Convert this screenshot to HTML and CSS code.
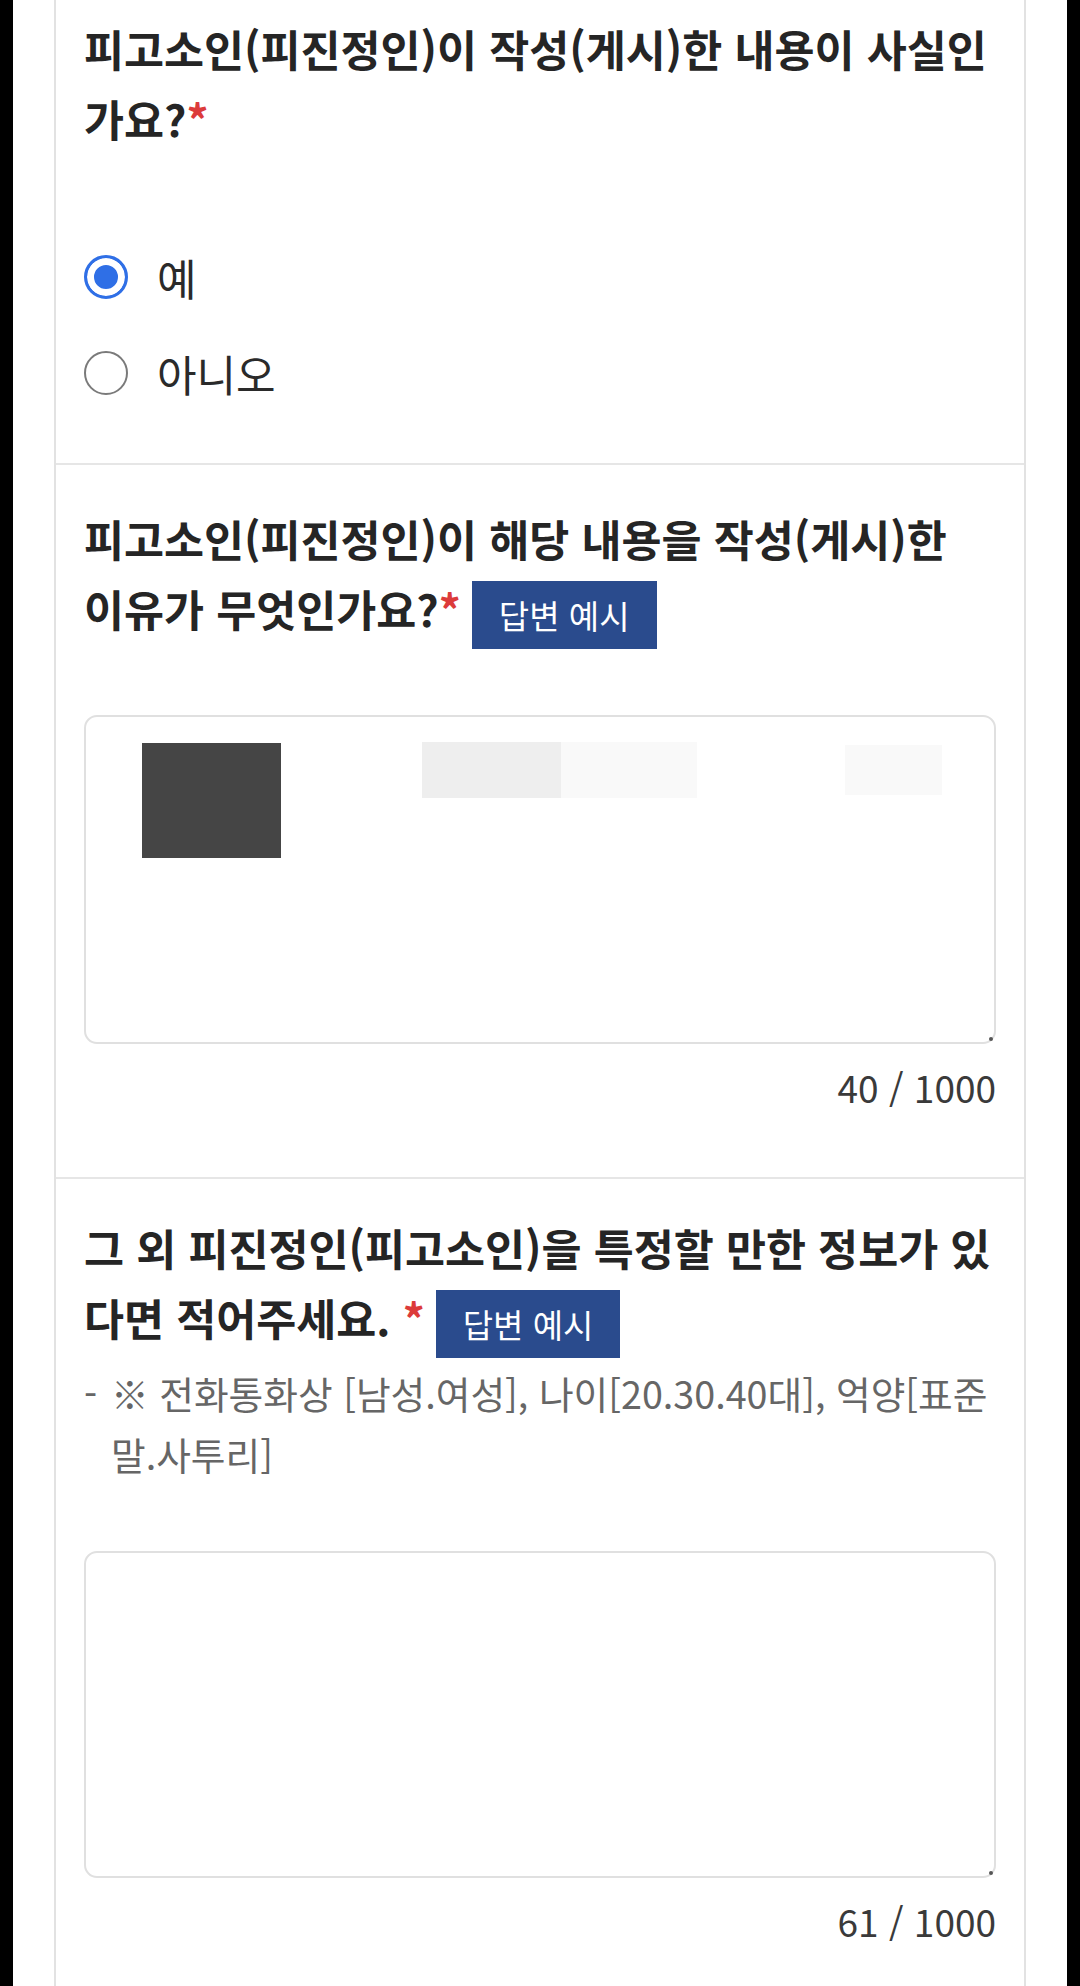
FILE: index.html
```html
<!DOCTYPE html>
<html lang="ko">
<head>
<meta charset="utf-8">
<title>신고서 작성</title>
<link rel="stylesheet" href="styles.css">
</head>
<body>
<div class="page">
  <div class="card">
    <section class="question q-first">
      <h2 class="q-title">피고소인(피진정인)이 작성(게시)한 내용이 사실인가요?<span class="req">*</span></h2>
      <div class="options">
        <label class="option"><input type="radio" name="fact" checked><span>예</span></label>
        <label class="option"><input type="radio" name="fact"><span>아니오</span></label>
      </div>
    </section>

    <section class="question q-second">
      <h2 class="q-title">피고소인(피진정인)이 해당 내용을 작성(게시)한<br>이유가 무엇인가요?<span class="req">*</span><button type="button" class="example-btn">답변 예시</button></h2>
      <div class="field field-reason">
        <textarea class="answer" aria-label="작성 이유"></textarea>
        <span class="redact redact-dark"></span>
        <span class="redact redact-light"></span>
        <span class="redact redact-faint redact-faint-1"></span>
        <span class="redact redact-faint redact-faint-2"></span>
      </div>
      <div class="counter">40 / 1000</div>
    </section>

    <section class="question q-third">
      <h2 class="q-title">그 외 피진정인(피고소인)을 특정할 만한 정보가 있다면 적어주세요. <span class="req">*</span><button type="button" class="example-btn">답변 예시</button></h2>
      <p class="hint"><span class="hint-dash">-</span><span class="hint-text">※ 전화통화상 [남성.여성], 나이[20.30.40대], 억양[표준말.사투리]</span></p>
      <div class="field field-info">
        <textarea class="answer" aria-label="특정 정보"></textarea>
      </div>
      <div class="counter">61 / 1000</div>
    </section>
  </div>
</div>
</body>
</html>
```

FILE: styles.css
```css
html, body {
  margin: 0;
  padding: 0;
  background: #000;
}

body {
  font-family: "Noto Sans CJK KR", "Noto Sans", sans-serif;
  color: #222;
}

.page {
  margin: 0 13px;
  padding: 0 41px;
  background: #fff;
  min-height: 1986px;
}

.card {
  border-left: 2px solid #e2e2e2;
  border-right: 2px solid #e2e2e2;
  min-height: 1986px;
}

.question {
  padding: 36px 28px 65px 28px;
  border-bottom: 2px solid #e6e6e6;
}

.q-first {
  padding-top: 14px;
  padding-bottom: 42px;
}

.q-second {
  padding-top: 39px;
}

.q-third {
  padding-top: 34px;
}

.q-title {
  margin: 0;
  font-size: 43.5px;
  line-height: 70px;
  font-weight: 700;
  color: #252525;
}

.req {
  color: #dc3b3b;
}

.example-btn {
  display: inline-block;
  vertical-align: middle;
  margin-left: 11px;
  height: 68px;
  padding: 0 27px;
  border: 0;
  border-radius: 0;
  background: #2a4b8d;
  color: #fff;
  font-family: inherit;
  font-size: 33px;
  font-weight: 400;
  line-height: 68px;
}

.options {
  margin-top: 75px;
  display: flex;
  flex-direction: column;
}

.option {
  display: flex;
  align-items: center;
  gap: 29px;
  height: 96px;
  font-size: 43px;
  color: #2a2a2a;
}

.option input {
  appearance: none;
  -webkit-appearance: none;
  box-sizing: border-box;
  margin: 0;
  width: 44px;
  height: 44px;
  border-radius: 50%;
  border: 2px solid #7a7a7a;
  background: #fff;
  flex: none;
}

.option input:checked {
  border: 3px solid #2f6fe6;
  background: #2f6fe6;
  box-shadow: inset 0 0 0 7px #fff;
}

.field {
  position: relative;
  margin-top: 66px;
}

.answer {
  display: block;
  box-sizing: border-box;
  width: 100%;
  height: 329px;
  margin: 0;
  border: 2px solid #e0e0e0;
  border-radius: 13px;
  background: #fff;
  resize: none;
  font-family: inherit;
  font-size: 36px;
}

.field-info {
  margin-top: 67px;
}

.field-info .answer {
  height: 327px;
}

.field::after {
  content: "";
  position: absolute;
  right: 3px;
  bottom: 3px;
  width: 4px;
  height: 4px;
  border-radius: 50%;
  background: #555;
}

.redact {
  position: absolute;
  display: block;
}

.redact-dark {
  left: 58px;
  top: 28px;
  width: 139px;
  height: 115px;
  background: #454545;
}

.redact-light {
  left: 338px;
  top: 27px;
  width: 139px;
  height: 56px;
  background: #eeeeee;
}

.redact-faint {
  background: #f9f9f9;
}

.redact-faint-1 {
  left: 477px;
  top: 27px;
  width: 136px;
  height: 56px;
}

.redact-faint-2 {
  left: 761px;
  top: 30px;
  width: 97px;
  height: 50px;
}

.counter {
  margin-top: 18px;
  text-align: right;
  font-size: 37px;
  line-height: 50px;
  color: #3a3a3a;
}

.hint {
  margin: 4px 0 0 0;
  display: flex;
  font-size: 37.7px;
  line-height: 61px;
  color: #666;
}

.hint-dash {
  flex: none;
  width: 27px;
}

.hint-text {
  flex: 1;
}
```
